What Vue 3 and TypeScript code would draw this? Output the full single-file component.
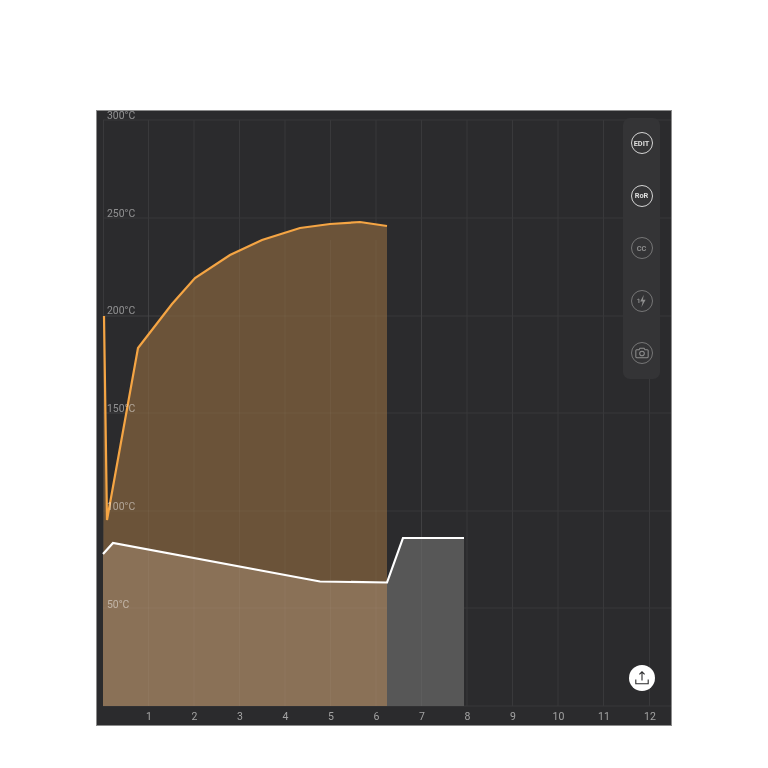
<script setup lang="ts">
const W = 576
const H = 616
const ox = 96
const oy = 110
const p = (pts: number[][]) => pts.map(([x, y]) => `${x - ox},${y - oy}`).join(' ')

const orange = [[104, 316], [107, 520], [138, 348], [172, 304], [195, 278], [230, 255], [262, 240], [300, 228], [330, 224], [360, 222], [387, 226]]
const white = [[103, 554], [113, 543], [320, 581.5], [387, 582.5], [403, 538], [464, 538]]

const orangeLine = p(orange)
const whiteLine = p(white)
const orangeFill = p([[103, 706], ...orange, [387, 706]])
const heatFill = p([[103, 706], [103, 554], [113, 543], [320, 581.5], [387, 582.5], [387, 706]])
const grayFill = p([[387, 706], [387, 582.5], [403, 538], [464, 538], [464, 706]])

const vLines = [148.5, 194, 239.5, 285, 330.5, 376, 421.5, 467, 512.5, 558, 603.5, 649.5].map((x) => x - ox)
const hLines = [120, 218, 316, 413, 511, 608, 706].map((y) => y - oy)
const temps = [
  { t: '300°C', y: 118.5 },
  { t: '250°C', y: 216.5 },
  { t: '200°C', y: 314 },
  { t: '150°C', y: 412 },
  { t: '100°C', y: 510 },
  { t: '50°C', y: 608 },
]
const minutes = vLines.map((x, i) => ({ x, t: String(i + 1) }))
</script>

<template>
  <main class="page">
    <section class="chart">
      <svg class="plot" :width="W" :height="H" :viewBox="`0 0 ${W} ${H}`">
        <g stroke="#39393b" stroke-width="1">
          <line v-for="x in vLines" :key="x" :x1="x" :x2="x" y1="10" y2="596" />
          <line v-for="y in hLines" :key="y" x1="7" x2="575" :y1="y" :y2="y" />
          <line x1="7.5" x2="7.5" y1="10" y2="596" />
        </g>
        <polygon :points="orangeFill" fill="#6b5339" />
        <polygon :points="heatFill" fill="#8a7157" />
        <polygon :points="grayFill" fill="#575757" />
        <g stroke="#ffffff" stroke-opacity="0.04" stroke-width="1">
          <line v-for="x in vLines.slice(0, 7)" :key="x" :x1="x" :x2="x" y1="130" y2="596" />
          <line x1="7" x2="291" y1="206" y2="206" />
          <line x1="7" x2="291" y1="303" y2="303" />
          <line x1="7" x2="291" y1="401" y2="401" />
          <line x1="7" x2="291" y1="498" y2="498" />
        </g>
        <polyline :points="orangeLine" fill="none" stroke="#f5a544" stroke-width="2.2" />
        <polyline :points="whiteLine" fill="none" stroke="#ffffff" stroke-width="2.2" />
        <g class="temp">
          <text v-for="l in temps" :key="l.t" x="11" :y="l.y - oy">{{ l.t }}</text>
        </g>
        <g class="minute">
          <text v-for="m in minutes" :key="m.t" :x="m.x + 0.5" y="610" text-anchor="middle">{{ m.t }}</text>
        </g>
      </svg>

      <div class="tools">
        <button class="tool"><span class="tiny">EDIT</span></button>
        <button class="tool"><span class="tiny">RoR</span></button>
        <button class="tool dim"><span class="tiny cc">CC</span></button>
        <button class="tool dim">
          <svg width="16" height="16" viewBox="0 0 16 16">
            <path d="M9.8 1.8 6.2 8.4h2.5l-1.3 5.8 4.2-7.4H8.9z" fill="#8e8e8e" />
            <path d="M3.4 6.6 4.9 6v4" fill="none" stroke="#8e8e8e" stroke-width="1" />
          </svg>
        </button>
        <button class="tool dim">
          <svg width="14" height="12" viewBox="0 0 16 14" fill="none" stroke="#8e8e8e" stroke-width="1.2">
            <path d="M1.8 3.2h2.7l1.1-1.7h4.8l1.1 1.7h2.7a1 1 0 0 1 1 1v7.3a1 1 0 0 1-1 1H1.8a1 1 0 0 1-1-1V4.2a1 1 0 0 1 1-1z" />
            <circle cx="8" cy="7.6" r="2.7" />
          </svg>
        </button>
      </div>

      <button class="share">
        <svg width="16" height="16" viewBox="0 0 16 16" fill="none" stroke="#2b2b2d" stroke-width="1.1">
          <path d="M8 10.5V2M5.4 4.4 8 1.8l2.6 2.6" />
          <path d="M1.8 9.5v4.2h12.4V9.5" />
        </svg>
      </button>
    </section>
  </main>
</template>

<style scoped>
.page {
  padding: 110px 96px 0;
}
.chart {
  position: relative;
  width: 576px;
  height: 616px;
  background: #2b2b2d;
  box-shadow: inset 0 0 0 1px #8c8c8c;
}
.plot {
  display: block;
  overflow: visible;
  will-change: transform;
}
.temp text {
  font: 10.4px Roboto, "Liberation Sans", sans-serif;
  fill: #ffffff;
  fill-opacity: 0.47;
}
.minute text {
  font: 10.5px Roboto, "Liberation Sans", sans-serif;
  fill: #a3a3a3;
}
.tools {
  position: absolute;
  top: 8px;
  right: 12px;
  width: 37px;
  height: 261px;
  box-sizing: border-box;
  padding-top: 14px;
  display: flex;
  flex-direction: column;
  align-items: center;
  gap: 30.5px;
  background: #343436;
  border-radius: 7px;
  will-change: transform;
}
.tool {
  width: 22px;
  height: 22px;
  box-sizing: border-box;
  padding: 0;
  display: flex;
  align-items: center;
  justify-content: center;
  background: transparent;
  border: 1.2px solid #d4d4d4;
  border-radius: 50%;
}
.tool.dim {
  border-color: #767676;
}
.tiny {
  font: 700 7.4px Roboto, "Liberation Sans", sans-serif;
  color: #dedede;
}
.tiny.cc {
  color: #8e8e8e;
}
.share {
  position: absolute;
  top: 555px;
  right: 17px;
  width: 26px;
  height: 26px;
  padding: 0;
  display: flex;
  align-items: center;
  justify-content: center;
  background: #ffffff;
  border: none;
  border-radius: 50%;
}
</style>

<style>
html,
body {
  background: #ffffff;
}
</style>
